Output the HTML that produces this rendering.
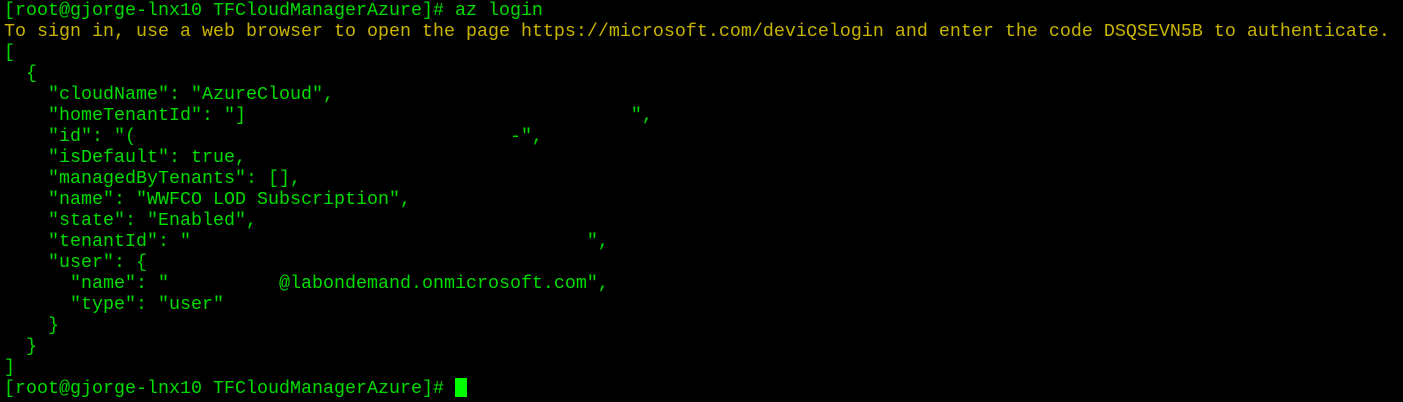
<!DOCTYPE html>
<html><head><meta charset="utf-8"><style>
html,body{margin:0;padding:0;background:#000;width:1403px;height:402px;overflow:hidden}
pre{margin:0;padding:0 0 0 4px;font-family:"Liberation Mono",monospace;font-size:18.33px;line-height:21px;color:#00dc00;white-space:pre}
.y{color:#c8b400}
.c{display:inline-block;width:12px;height:19px;background:#00ff00;vertical-align:-4px}
</style></head><body><pre>[root@gjorge-lnx10 TFCloudManagerAzure]# az login
<span class="y">To sign in, use a web browser to open the page https://microsoft.com/devicelogin and enter the code DSQSEVN5B to authenticate.</span>
[
  {
    "cloudName": "AzureCloud",
    "homeTenantId": "]                                   ",
    "id": "(                                  -",
    "isDefault": true,
    "managedByTenants": [],
    "name": "WWFCO LOD Subscription",
    "state": "Enabled",
    "tenantId": "                                    ",
    "user": {
      "name": "          @labondemand.onmicrosoft.com",
      "type": "user"
    }
  }
]
[root@gjorge-lnx10 TFCloudManagerAzure]# <span class="c"></span></pre></body></html>
